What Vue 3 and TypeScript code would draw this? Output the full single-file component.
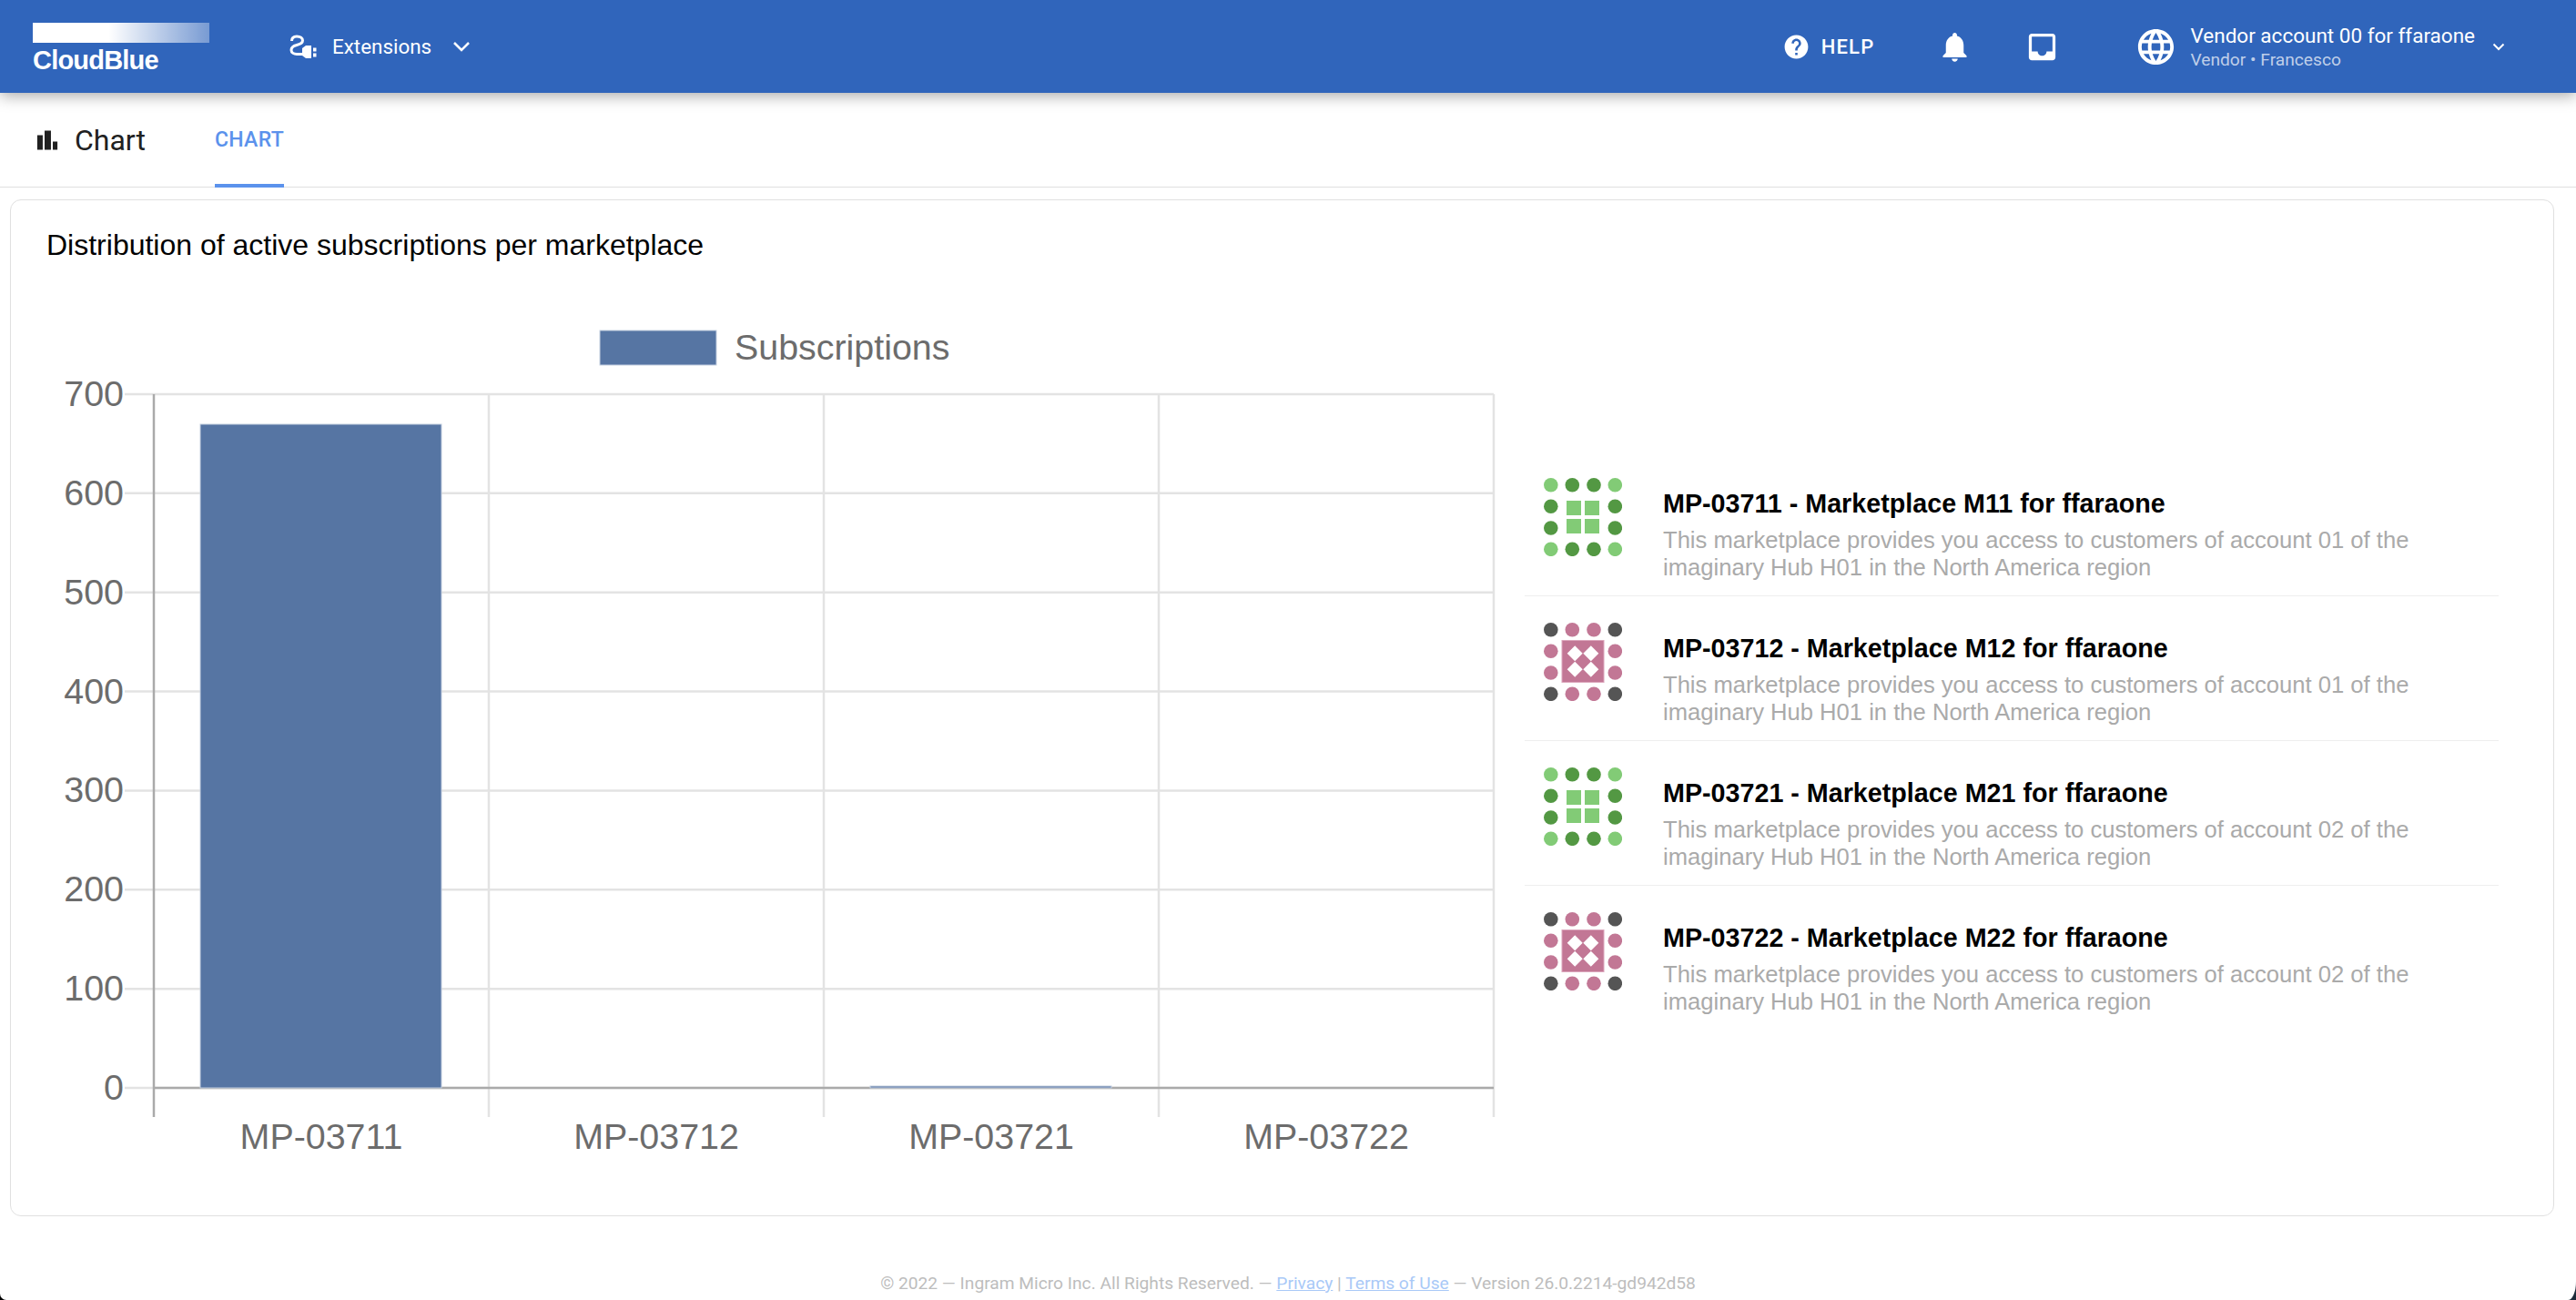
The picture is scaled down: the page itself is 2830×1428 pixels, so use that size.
<template>
  <div class="page">
    <header class="topbar">
      <div class="logo">
        <div class="logo-band"></div>
        <div class="logo-text">CloudBlue</div>
      </div>
      <div class="module">
        <svg class="plug" viewBox="0 0 30 27" width="30" height="27">
          <path d="M2.5 7C2.5 3.5 5 2 8 2c4 0 6.5 2 6.5 4.5S12 10.500 8 11.500C4 12.500 2 14 2 17c0 3 3 4.500 6 4.500h6" fill="none" stroke="#fff" stroke-width="3" />
          <path d="M14 15l4-3h6v14h-6l-4-3z" fill="#fff" />
          <rect x="26" y="14.500" width="3.500" height="4" fill="#fff" />
          <rect x="26" y="20.500" width="3.500" height="4" fill="#fff" />
        </svg>
        <span class="module-name">Extensions</span>
        <svg class="chevron" viewBox="0 0 20 12" width="20" height="12">
          <path d="M2 2l8 8 8-8" fill="none" stroke="#fff" stroke-width="2.500" />
        </svg>
      </div>
      <div class="topbar-right">
        <div class="help">
          <svg viewBox="0 0 24 24" width="31" height="31"><path :d="icons.help" fill="#fff" /></svg>
          <span>HELP</span>
        </div>
        <svg class="bell" viewBox="0 0 24 24" width="39" height="39"><path :d="icons.bell" fill="#fff" /></svg>
        <svg class="inbox" viewBox="0 0 24 24" width="39" height="39"><path :d="icons.inbox" fill="#fff" /></svg>
        <div class="account">
          <svg viewBox="0 0 24 24" width="47" height="47"><path :d="icons.globe" fill="#fff" /></svg>
          <div class="account-text">
            <div class="account-name">Vendor account 00 for ffaraone</div>
            <div class="account-role">Vendor • Francesco</div>
          </div>
          <svg class="account-chevron" viewBox="0 0 14 9" width="14" height="9">
            <path d="M1.500 1.500L7 7l5.500-5.500" fill="none" stroke="#fff" stroke-width="2" />
          </svg>
        </div>
      </div>
    </header>

    <nav class="tabs">
      <svg viewBox="0 0 24 24" width="38" height="38"><path :d="icons.bars" fill="#212121" /></svg>
      <span class="tabs-title">Chart</span>
      <span class="tab">CHART</span>
    </nav>

    <main class="card">
      <h2 class="card-title">Distribution of active subscriptions per marketplace</h2>
      <div class="card-body">
        <svg class="chart" viewBox="12 340 1660 950" width="1660" height="950">
          <rect x="659" y="363" width="128" height="38" class="bar" />
          <text x="807" y="395" class="chart-text">Subscriptions</text>
          <g v-for="t in ticks" :key="t.value">
            <line x1="137" :x2="chartRight" :y1="t.y" :y2="t.y" class="grid" />
            <text x="136" :y="t.y + 13" text-anchor="end" class="chart-text">{{ t.value }}</text>
          </g>
          <line v-for="c in categories" :key="c.name" :x1="c.x + 368" :x2="c.x + 368" y1="433" y2="1227" class="grid" />
          <line x1="169" x2="169" y1="433" y2="1227" class="axis" />
          <line x1="169" :x2="chartRight" y1="1195" y2="1195" class="axis" />
          <g v-for="c in categories" :key="c.name + 'bar'">
            <rect :x="c.x + 51" :y="1195 - c.height" width="265" :height="c.height" class="bar" />
            <text :x="c.x + 184" y="1262" text-anchor="middle" class="chart-text">{{ c.name }}</text>
          </g>
        </svg>
        <ul class="market-list">
          <li v-for="m in marketplaces" :key="m.id" class="market">
            <svg class="market-icon" viewBox="0 0 86 86" width="86" height="86">
              <circle v-for="(d, i) in dots" :key="i" :cx="d.x" :cy="d.y" r="7.800"
                :fill="d.corner ? m.palette.corner : m.palette.edge" />
              <template v-if="m.palette.kind === 'squares'">
                <rect v-for="s in squares" :key="s.x + '-' + s.y" :x="s.x" :y="s.y" width="16" height="16" fill="#82cb76" />
              </template>
              <template v-else>
                <rect x="20" y="19.500" width="46" height="46" fill="#c27795" stroke="#dca6bc" stroke-width="1" />
                <path v-for="s in diamonds" :key="s.x + '-' + s.y"
                  :d="`M${s.x} ${s.y - 8.500}l8.500 8.500-8.500 8.500-8.500-8.500z`" fill="#fff" />
              </template>
            </svg>
            <div class="market-text">
              <div class="market-title">{{ m.id }} - {{ m.name }}</div>
              <div class="market-desc">This marketplace provides you access to customers of account {{ m.account }} of the imaginary Hub H01 in the North America region</div>
            </div>
          </li>
        </ul>
      </div>
    </main>

    <footer class="footer">
      © 2022 — Ingram Micro Inc. All Rights Reserved. — <a>Privacy</a> | <a>Terms of Use</a> — Version 26.0.2214-gd942d58
    </footer>
  </div>
</template>

<script setup lang="ts">
const icons = {
  help: 'M12 2C6.48 2 2 6.48 2 12s4.48 10 10 10 10-4.48 10-10S17.52 2 12 2zm1 17h-2v-2h2v2zm2.07-7.75l-.9.92C13.45 12.9 13 13.5 13 15h-2v-.5c0-1.1.45-2.1 1.17-2.83l1.24-1.26c.37-.36.59-.86.59-1.41 0-1.1-.9-2-2-2s-2 .9-2 2H8c0-2.21 1.79-4 4-4s4 1.79 4 4c0 .88-.36 1.68-.93 2.25z',
  bell: 'M12 22c1.1 0 2-.9 2-2h-4c0 1.1.89 2 2 2zm6-6v-5c0-3.07-1.64-5.64-4.500-6.320V4c0-.83-.67-1.500-1.500-1.500s-1.500.67-1.500 1.500v.68C7.630 5.360 6 7.920 6 11v5l-2 2v1h16v-1l-2-2z',
  inbox: 'M19 3H5c-1.100 0-2 .9-2 2v14c0 1.100.9 2 2 2h14c1.100 0 2-.9 2-2V5c0-1.100-.9-2-2-2zm0 12h-4c0 1.660-1.350 3-3 3s-3-1.340-3-3H5V5h14v10z',
  globe: 'M11.990 2C6.470 2 2 6.480 2 12s4.470 10 9.990 10C17.520 22 22 17.520 22 12S17.520 2 11.990 2zm6.930 6h-2.950c-.32-1.250-.78-2.450-1.380-3.560 1.840.63 3.370 1.910 4.330 3.560zM12 4.040c.83 1.200 1.480 2.530 1.910 3.960h-3.820c.43-1.430 1.080-2.760 1.910-3.960zM4.260 14C4.100 13.360 4 12.690 4 12s.1-1.360.26-2h3.380c-.08.66-.14 1.320-.14 2 0 .68.06 1.340.14 2H4.260zm.82 2h2.950c.32 1.250.78 2.450 1.380 3.560-1.840-.63-3.370-1.900-4.330-3.560zm2.950-8H5.080c.96-1.660 2.490-2.930 4.330-3.560C8.810 5.550 8.350 6.750 8.030 8zM12 19.960c-.83-1.200-1.480-2.530-1.910-3.960h3.820c-.43 1.430-1.080 2.760-1.910 3.960zM14.340 14H9.660c-.09-.66-.16-1.320-.16-2 0-.68.07-1.350.16-2h4.680c.09.65.16 1.320.16 2 0 .68-.07 1.340-.16 2zm.25 5.560c.6-1.110 1.060-2.310 1.380-3.560h2.950c-.96 1.650-2.490 2.930-4.330 3.560zM16.360 14c.08-.66.14-1.320.14-2 0-.68-.06-1.340-.14-2h3.380c.16.64.26 1.310.26 2s-.1 1.360-.26 2h-3.380z',
  bars: 'M5 8.500h3.800v10.200H5zM10.100 5.400h4.400v13.300h-4.400zM15.800 13H19v5.700h-3.200z',
}

const chartRight = 1641
const ticks = [700, 600, 500, 400, 300, 200, 100, 0].map((value) => ({
  value,
  y: 1195 - (value / 700) * 762,
}))

const categories = [
  { name: 'MP-03711', x: 169, height: 729 },
  { name: 'MP-03712', x: 537, height: 0 },
  { name: 'MP-03721', x: 905, height: 2 },
  { name: 'MP-03722', x: 1273, height: 0 },
]

// the marketplace icons share a ring of 12 dots
const pos = [7.800, 31.300, 55, 78.300]
const dots = pos.flatMap((y, r) =>
  pos
    .map((x, c) => ({ x, y, c, r, corner: (r === 0 || r === 3) && (c === 0 || c === 3) }))
    .filter((d) => d.r === 0 || d.r === 3 || d.c === 0 || d.c === 3),
)
const squares = [
  { x: 25, y: 25 },
  { x: 45, y: 25 },
  { x: 25, y: 45 },
  { x: 45, y: 45 },
]
const diamonds = [
  { x: 34.200, y: 33.700 },
  { x: 51.800, y: 33.700 },
  { x: 34.200, y: 51.300 },
  { x: 51.800, y: 51.300 },
]

const green = { kind: 'squares', corner: '#82cb76', edge: '#539843' }
const pink = { kind: 'diamonds', corner: '#555555', edge: '#c27795' }

const marketplaces = [
  { id: 'MP-03711', name: 'Marketplace M11 for ffaraone', account: '01', palette: green },
  { id: 'MP-03712', name: 'Marketplace M12 for ffaraone', account: '01', palette: pink },
  { id: 'MP-03721', name: 'Marketplace M21 for ffaraone', account: '02', palette: green },
  { id: 'MP-03722', name: 'Marketplace M22 for ffaraone', account: '02', palette: pink },
]
</script>

<style>
html,
body {
  margin: 0;
  background: linear-gradient(90deg, #000 50%, #1c2b3a 50%);
}
</style>

<style scoped>
.page {
  width: 2830px;
  height: 1428px;
  overflow: hidden;
  background: #fff;
  border-bottom-left-radius: 7px;
  border-bottom-right-radius: 9px 20px;
  font-family: Roboto, sans-serif;
}

.topbar {
  position: relative;
  z-index: 2;
  display: flex;
  align-items: center;
  height: 102px;
  padding-left: 36px;
  box-sizing: border-box;
  background: #3065bb;
  box-shadow: 0 3px 16px rgba(0, 0, 0, 0.35);
  color: #fff;
}

.logo {
  width: 194px;
  margin-top: 5px;
}

.logo-band {
  height: 22px;
  background: linear-gradient(90deg, #fff 43%, rgba(255, 255, 255, 0.35) 100%);
}

.logo-text {
  margin-top: 2px;
  font-family: 'Liberation Sans', sans-serif;
  font-size: 29px;
  font-weight: 700;
  line-height: 34px;
  letter-spacing: -0.800px;
}

.module {
  display: flex;
  align-items: center;
  margin-left: 88px;
}

.module-name {
  margin-left: 17px;
  font-size: 22.400px;
}

.chevron {
  margin-left: 23px;
}

.topbar-right {
  display: flex;
  align-items: center;
  margin-left: auto;
}

.help {
  display: flex;
  align-items: center;
  gap: 12px;
  font-size: 22px;
  font-weight: 500;
  letter-spacing: 1.200px;
}

.bell {
  margin-left: 69px;
}

.inbox {
  margin-left: 57px;
}

.account {
  display: flex;
  align-items: center;
  margin-left: 82px;
  margin-right: 78px;
}

.account-text {
  margin-left: 14px;
  margin-top: -1px;
}

.account-name {
  font-size: 22.500px;
  line-height: 30px;
}

.account-role {
  font-size: 19.200px;
  line-height: 24px;
  color: rgba(255, 255, 255, 0.7);
}

.account-chevron {
  margin-left: 19px;
}

.tabs {
  display: flex;
  align-items: center;
  height: 104px;
  padding-left: 33px;
  box-sizing: border-box;
  border-bottom: 1px solid #e0e0e0;
}

.tabs-title {
  margin-left: 11px;
  font-size: 32px;
  color: #212121;
}

.tab {
  display: flex;
  align-items: center;
  align-self: stretch;
  margin-left: 76px;
  padding-top: 2px;
  box-sizing: border-box;
  border-bottom: 4px solid #5b92ec;
  margin-bottom: -1px;
  font-size: 23px;
  font-weight: 500;
  letter-spacing: 0.300px;
  color: #5b92ec;
}

.card {
  margin: 13px 24px 0 11px;
  height: 1117px;
  box-sizing: border-box;
  border: 1px solid #e0e0e0;
  border-radius: 12px;
}

.card-title {
  margin: 0;
  padding: 30px 39px 0;
  font-family: 'Liberation Sans', sans-serif;
  font-size: 32px;
  font-weight: 400;
  line-height: 38px;
  color: #000;
}

.card-body {
  display: flex;
  margin-top: 52px;
}

.chart {
  flex: none;
}

.bar {
  fill: #5675a3;
  stroke: #c3cfe0;
  stroke-width: 1;
}

.grid {
  stroke: #e3e3e3;
  stroke-width: 2.500;
}

.axis {
  stroke: #aaaaaa;
  stroke-width: 2.500;
}

.chart-text {
  font-family: 'Liberation Sans', sans-serif;
  font-size: 39.400px;
  fill: #6c6c6c;
}

.market-list {
  width: 1070px;
  margin: 156px 0 0 3px;
  padding: 0;
  list-style: none;
}

.market {
  display: flex;
  height: 159px;
  box-sizing: border-box;
  padding: 29px 0 0 21px;
  border-bottom: 1px solid #eeeeee;
}

.market:last-child {
  border-bottom: none;
}

.market-icon {
  flex: none;
}

.market-text {
  margin: 11px 0 0 45px;
  width: 880px;
  font-family: 'Liberation Sans', sans-serif;
}

.market-title {
  font-size: 28.700px;
  font-weight: 700;
  line-height: 34px;
  color: #000;
}

.market-desc {
  margin-top: 8px;
  font-size: 25.600px;
  line-height: 30px;
  color: #aaaaaa;
}

.footer {
  margin-top: 62px;
  text-align: center;
  font-size: 19.200px;
  line-height: 24px;
  color: #bdbdbd;
}

.footer a {
  color: #a9c9f7;
  text-decoration: underline;
}
</style>
